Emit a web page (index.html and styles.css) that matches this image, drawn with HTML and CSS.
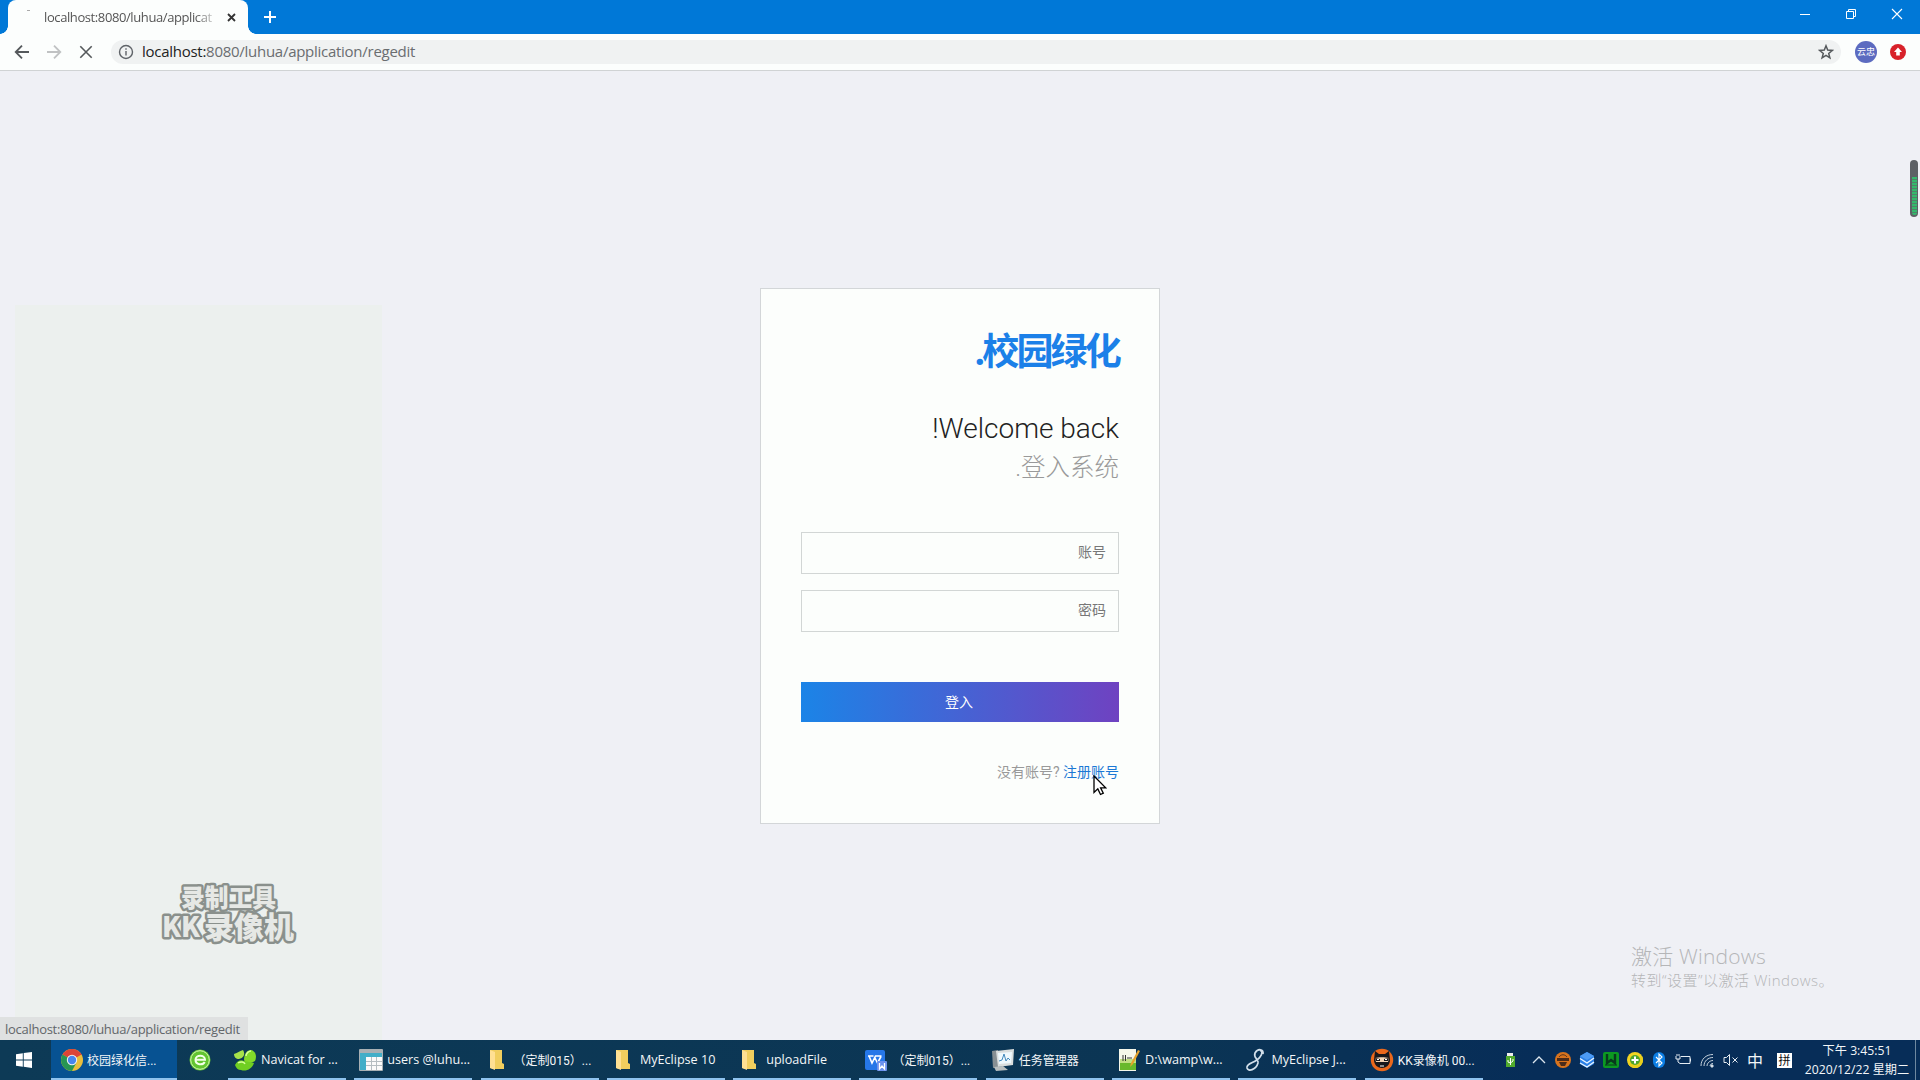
FILE: index.html
```html
<!DOCTYPE html>
<html lang="zh-CN">
<head>
<meta charset="utf-8">
<title>校园绿化信息系统</title>
<link rel="stylesheet" href="styles.css">
</head>
<body>
<div class="screen">
  <header class="titlebar">
    <div class="tab">
      <span class="spinner"></span>
      <span class="tab-title">localhost:8080/luhua/applicat</span>
      <svg class="tab-close" width="9" height="9" viewBox="0 0 9 9"><path d="M1 1l7 7M8 1l-7 7" stroke="#333" stroke-width="1.8"/></svg>
    </div>
    <svg class="new-tab" width="14" height="14" viewBox="0 0 14 14"><path d="M7 1v12M1 7h12" stroke="#fff" stroke-width="2"/></svg>
    <div class="window-buttons">
      <svg width="12" height="12" viewBox="0 0 12 12"><path d="M1 6.5h10" stroke="#fff"/></svg>
      <svg width="12" height="12" viewBox="0 0 12 12" fill="none" stroke="#fff"><path d="M1.5 3.5h7v7h-7zM3.5 3.5v-2h7v7h-2"/></svg>
      <svg width="12" height="12" viewBox="0 0 12 12"><path d="M1 1l10 10M11 1L1 11" stroke="#fff" stroke-width="1.1"/></svg>
    </div>
  </header>

  <nav class="toolbar">
    <svg class="nav-icon" width="16" height="16" viewBox="0 0 16 16" fill="none" stroke="#55595c" stroke-width="1.8"><path d="M15 8H2M8 1.7L1.7 8 8 14.3"/></svg>
    <svg class="nav-icon" width="16" height="16" viewBox="0 0 16 16" fill="none" stroke="#c0c2c3" stroke-width="1.8"><path d="M1 8h13M8 1.7L14.3 8 8 14.3"/></svg>
    <svg class="nav-icon" width="16" height="16" viewBox="0 0 16 16" fill="none" stroke="#55595c" stroke-width="1.6"><path d="M2.3 2.3l11.4 11.4M13.7 2.3L2.3 13.7"/></svg>
    <div class="address">
      <svg width="16" height="16" viewBox="0 0 16 16" fill="none" stroke="#5f6368" stroke-width="1.4"><circle cx="8" cy="8" r="6.5"/><path d="M8 7v4.5M8 4.2v1.6"/></svg>
      <span class="url"><b>localhost:</b>8080/luhua/application/regedit</span>
      <svg class="star" width="16" height="16" viewBox="0 0 16 16" fill="none" stroke="#55595c" stroke-width="1.5"><path d="M8 1.8l1.7 4.3 4.6.3-3.6 3 1.2 4.5L8 11.4l-3.9 2.5 1.2-4.5-3.6-3 4.6-.3z"/></svg>
    </div>
    <span class="avatar">云忠</span>
    <svg class="update" width="16" height="16" viewBox="0 0 16 16"><circle cx="8" cy="8" r="8" fill="#d8222a"/><path d="M8 3.5l4 4.4H9.8V11.5H6.2V7.9H4z" fill="#fff"/></svg>
  </nav>

  <main class="page">
    <form class="card" dir="rtl">
      <h1 class="brand">校园绿化.</h1>
      <h2 class="welcome">Welcome back!</h2>
      <p class="subtitle">登入系统.</p>
      <input class="field" type="text" placeholder="账号">
      <input class="field" type="text" placeholder="密码">
      <button class="submit" type="button">登入</button>
      <p class="signup" dir="ltr">没有账号? <a href="#">注册账号</a></p>
    </form>

    <svg class="recorder-mark" width="150" height="72" viewBox="0 0 150 72">
      <text x="24" y="28" font-size="25" textLength="95" lengthAdjust="spacingAndGlyphs">录制工具</text>
      <text x="5" y="58" font-size="28" textLength="38" lengthAdjust="spacingAndGlyphs">KK</text>
      <text x="47" y="59" font-size="30" textLength="90" lengthAdjust="spacingAndGlyphs">录像机</text>
    </svg>
    <div class="activate">
      <div class="activate-title">激活 Windows</div>
      <div class="activate-text">转到“设置”以激活 Windows。</div>
    </div>
    <div class="level"><span></span></div>
    <div class="status">localhost:8080/luhua/application/regedit</div>
    <svg class="cursor" width="14" height="22" viewBox="0 0 14 22"><path d="M1 1v16.5l3.8-3.6 2.7 5.6 2.8-1.3-2.7-5.4H12.7z" fill="#fff" stroke="#000" stroke-width="1.3"/></svg>
  </main>

  <footer class="taskbar">
    <div class="start"><svg width="16" height="16" viewBox="0 0 16 16" fill="#fff"><path d="M0 2.2l6.8-1v6.3H0zM7.7 1.1L16 0v7.5H7.7zM0 8.4h6.8v6.4L0 13.8zM7.7 8.4H16V16l-8.3-1.2z"/></svg></div>
    <div class="task active">
      <svg width="22" height="22" viewBox="0 0 22 22"><circle cx="11" cy="11" r="11" fill="#e9bf3c"/><path d="M11 11L1.5 5.5A11 11 0 0 1 20.5 5.5z" fill="#dc4437"/><path d="M11 11L1.5 5.5A11 11 0 0 0 11 22l4.5-8.5z" fill="#279653"/><path d="M11 6h9.7L20 4.8 8 4z" fill="#dc4437"/><circle cx="11" cy="11" r="5.2" fill="#f3f3f3"/><circle cx="11" cy="11" r="4.2" fill="#4886ed"/></svg>
      <span class="han">校园绿化信...</span>
    </div>
    <div class="pin"><svg width="22" height="22" viewBox="0 0 22 22"><circle cx="11" cy="11" r="10.5" fill="#62c52f"/><circle cx="11" cy="11" r="9.3" fill="none" stroke="#d4f5b4" stroke-width="1"/><path d="M6.500 10.800h9.500c0-5.500-9.500-5.500-9.500 0 0 5.200 7.300 5.800 9.200 2.200" fill="none" stroke="#f3ffe8" stroke-width="2"/></svg></div>
    <div class="task">
      <svg width="24" height="24" viewBox="0 0 24 24"><path d="M1 6c4-1 5-3 9-4 3 5 0 8-4 9-3 0-5-2-5-5z" fill="#a6e24a"/><path d="M11 12c0-6 3-10 7-10 5 1 6 7 4 11-3 2-7 3-10 1z" fill="#82d929"/><path d="M2 17c2-4 6-6 9-4 3 1 8 1 10 2-2 6-8 9-13 7-3 0-5-2-6-5z" fill="#70cf22"/><path d="M13 8c0-3 3-5 5-5M5 15c3-2 6-1 7 1" stroke="#d8ff9a" stroke-width="1.500" fill="none"/></svg>
      <span>Navicat for ...</span>
    </div>
    <div class="task">
      <svg width="24" height="24" viewBox="0 0 24 24"><rect y="1" width="24" height="22" rx="1" fill="#a9b0b4"/><path d="M1 5h22v5H7v12H1z" fill="#42aec8"/><path d="M7 9h16v13H7z" fill="#fafafa"/><path d="M7 13.500h16M7 17.500h16M12.500 9v13M17.500 9v13" stroke="#b5bdc1" stroke-width="1"/></svg>
      <span>users @luhu...</span>
    </div>
    <div class="task">
      <svg width="24" height="24" viewBox="0 0 24 24"><path d="M4 2h12v13l2 1v5H8L4 20z" fill="#f1ce5e"/><path d="M4 2l5 2v18l-5-2z" fill="#ffe093"/></svg>
      <span class="han">（定制015）...</span>
    </div>
    <div class="task">
      <svg width="24" height="24" viewBox="0 0 24 24"><path d="M4 2h12v13l2 1v5H8L4 20z" fill="#f1ce5e"/><path d="M4 2l5 2v18l-5-2z" fill="#ffe093"/></svg>
      <span>MyEclipse 10</span>
    </div>
    <div class="task">
      <svg width="24" height="24" viewBox="0 0 24 24"><path d="M4 2h12v13l2 1v5H8L4 20z" fill="#f1ce5e"/><path d="M4 2l5 2v18l-5-2z" fill="#ffe093"/></svg>
      <span>uploadFile</span>
    </div>
    <div class="task">
      <svg width="24" height="24" viewBox="0 0 24 24"><rect x="1" y="2" width="20" height="20" rx="2" fill="#2677e8"/><path d="M4 8h5.500M5 8l3 7 3.500-7h6M11 10l2.500 5 3.500-6.500" stroke="#fff" stroke-width="1.600" fill="none"/><rect x="13" y="13" width="10" height="10" rx="1" fill="#6b91ee"/><path d="M15.500 15v6l2.500-3 2.500 3v-6" stroke="#fff" stroke-width="1.300" fill="none"/></svg>
      <span class="han">（定制015）...</span>
    </div>
    <div class="task">
      <svg width="24" height="24" viewBox="0 0 24 24"><path d="M1 3l6-1v17l-5 1z" fill="#878f93"/><path d="M5 3l18-2-1 16-15 2z" fill="#d9dddd"/><path d="M7 5l14-1-1 11-12 1z" fill="#eef8fd"/><path d="M8 13l3-1 2-6 2 7 2-3 2 2" stroke="#4289bd" fill="none"/><path d="M3 19l9-1 5 4-12 1z" fill="#b8bebf"/></svg>
      <span class="han">任务管理器</span>
    </div>
    <div class="task">
      <svg width="24" height="24" viewBox="0 0 24 24"><path d="M2 1h17v22H2z" fill="#f5f7e9"/><path d="M3 14h16v8H3z" fill="#68b92c"/><path d="M3 11h16v4H3z" fill="#bfdf83"/><path d="M6 7v6M8.500 7v6M10 10h5" stroke="#333"/><path d="M21 2l-7 13-1 4 3-3 7-13z" fill="#e5a32c"/></svg>
      <span>D:\wamp\w...</span>
    </div>
    <div class="task">
      <svg width="24" height="24" viewBox="0 0 24 24"><path d="M20 6c1-5-5-6-8-1-2 5 4 6 3 10-2 7-10 9-11 5-1-5 9-5 13-11 3-4 2-7 0-6" fill="none" stroke="#d2dfea" stroke-width="1.700"/></svg>
      <span>MyEclipse J...</span>
    </div>
    <div class="task">
      <svg width="24" height="24" viewBox="0 0 24 24"><circle cx="12" cy="12" r="11.200" fill="#e9681c"/><path d="M5 3l4 3h6l4-3 1 9c0 5-4 8-8 8s-8-3-8-8z" fill="#17171b"/><path d="M5 10c4-1 10-1 14 0l-1 4H6z" fill="#f2d3b3"/><path d="M5 10l5 1v2H6zM19 10l-5 1v2h4z" fill="#17171b"/><path d="M7 11.500h2M15 11.500h2M10 18h4" stroke="#fff"/></svg>
      <span class="han">KK录像机 00...</span>
    </div>

    <div class="tray">
      <svg viewBox="0 0 16 16"><path d="M5 1h6v3H5z" fill="#eee"/><path d="M4 4h9v11H4z" fill="#51aa2d"/><path d="M8.500 6v7M6 8v2l2.500 1L11 9V7" stroke="#fff" fill="none"/></svg>
      <svg viewBox="0 0 16 16"><path d="M2 11l6-6 6 6" fill="none" stroke="#dce6ee" stroke-width="1.300"/></svg>
      <svg viewBox="0 0 16 16"><circle cx="8" cy="8" r="8" fill="#d8731d"/><path d="M2 6h12v3H2zM4 10h8l-2 4H6z" fill="#4b2b1a"/><path d="M4 5c2-3 6-3 8 0" stroke="#5b341c" fill="none"/></svg>
      <svg viewBox="0 0 16 16"><path d="M8 0l7 4v8l-7 4-7-4V4z" fill="#2b80e7"/><path d="M8 0l7 4-7 4-7-4z" fill="#4d9bf5"/><path d="M1 6.500l7 4.500 7-5M1 11l7 4 7-5" stroke="#e9f5ff" stroke-width="1.400" fill="none"/></svg>
      <svg viewBox="0 0 16 16"><rect width="16" height="16" rx="2" fill="#0c9922"/><path d="M4 2v9l4-3 4 3V2" fill="none" stroke="#08391d" stroke-width="2.400"/><path d="M2 13h12" stroke="#08391d"/></svg>
      <svg viewBox="0 0 16 16"><circle cx="8" cy="8" r="8" fill="#f2d522"/><path d="M1 12A8 8 0 0 0 15 4L8 8z" fill="#e8cf1c"/><circle cx="8" cy="8" r="5" fill="#4fa52c"/><path d="M8 4.500v7M4.500 8h7" stroke="#fff" stroke-width="2"/></svg>
      <svg viewBox="0 0 16 16"><rect x="2" width="12" height="16" rx="6" fill="#0b7ee5"/><path d="M5 5l6 6-3 3V2l3 3-6 6" stroke="#fff" fill="none" stroke-width="1.100"/></svg>
      <svg viewBox="0 0 16 16" fill="none" stroke="#e6edf3"><path d="M6 4.500h9v7H5M15.500 6.500v3M1 4v3h4V4M3 7v3l2 1.500M2 2v2M4 2v2"/></svg>
      <svg viewBox="0 0 16 16" fill="none" stroke="#c6d2dd"><path d="M2 14C2 7 7 2.500 14 2.500M5 14c0-5 4-8.500 9-8.500M8 14c0-3 3-5.500 6-5.500M11 14c0-1.500 1.500-2.500 3-2.500"/><path d="M12 13h2v2h-2z" fill="#fff"/></svg>
      <svg viewBox="0 0 16 16" fill="none" stroke="#e6edf3"><path d="M1 5.500h2.500l3-3v11l-3-3H1zM9.500 5.500l5 5M14.500 5.500l-5 5"/></svg>
      <span class="ime">中</span>
      <span class="pinyin">拼</span>
    </div>
    <div class="clock"><div>下午 3:45:51</div><div>2020/12/22 星期二</div></div>
    <div class="show-desktop"></div>
  </footer>
</div>
</body>
</html>
```
FILE: styles.css
```css
* { box-sizing: border-box; }
body { margin: 0; overflow: hidden; font-family: "Open Sans", "Noto Sans CJK SC", sans-serif; }
h1, h2, p { margin: 0; }
svg { display: block; flex: none; }
.screen { width: 1920px; height: 1080px; display: flex; flex-direction: column; }

.titlebar { height: 34px; flex: none; background: #0078d7; display: flex; padding-left: 8px; }
.tab { width: 240px; background: #fcfefd; border-radius: 8px 8px 0 0; display: flex; align-items: center; padding: 0 12px 0 19px; position: relative; }
.tab::before, .tab::after { content: ""; position: absolute; bottom: 0; width: 8px; height: 8px; }
.tab::before { left: -8px; background: radial-gradient(circle at 0 0, transparent 7.5px, #fcfefd 8px); }
.tab::after { right: -8px; background: radial-gradient(circle at 100% 0, transparent 7.5px, #fcfefd 8px); }
.spinner { width: 3px; height: 1px; background: #aaa; align-self: flex-start; margin: 10px 14px 0 0; flex: none; }
.tab-title { width: 176px; white-space: nowrap; font-size: 13px; letter-spacing: -.4px; color: #555; -webkit-mask-image: linear-gradient(90deg, #000 86%, transparent 100%); }
.tab-close { margin-left: 7px; }
.new-tab { margin: 10px 0 0 15px; }
.window-buttons { margin-left: auto; display: flex; gap: 34px; padding: 8px 17px 0 0; }

.toolbar { height: 37px; flex: none; background: #fcfefd; border-bottom: 1px solid #d0d3d4; display: flex; align-items: center; padding: 0 14px; }
.nav-icon { margin-right: 16px; }
.address { width: 1730px; height: 24px; border-radius: 12px; background: #f0f2f2; display: flex; align-items: center; padding: 0 7px 0 7px; margin-left: 1px; }
.url { margin: -2px 0 0 8px; font-size: 15px; letter-spacing: -.27px; color: #6a6d70; white-space: nowrap; }
.url b { font-weight: 400; color: #222; }
.star { margin-left: auto; }
.avatar { width: 22px; height: 22px; margin-left: 14px; border-radius: 50%; background: #5c6bc0; color: #fff; font-size: 9px; line-height: 22px; text-align: center; flex: none; }
.update { margin-left: 13px; }

.page { height: 969px; flex: none; position: relative; background: linear-gradient(#ecf0ee, #ecf0ee) 15px 234px / 367px 735px no-repeat, #eff0f5; display: flex; justify-content: center; align-items: flex-start; padding-top: 217px; }
.card { width: 400px; height: 536px; padding: 34px 40px; border: 1px solid #d3d6d8; background: #fcfefc; display: flex; flex-direction: column; }
.brand { height: 56px; line-height: 56px; font-size: 37px; letter-spacing: -2.8px; color: #1b80e8; }
.welcome { margin-top: 30px; height: 40px; font: 300 28px/40px Roboto, sans-serif; color: #222; }
.subtitle { height: 40px; line-height: 38px; font-size: 24.5px; font-weight: 300; color: #999; font-family: Roboto, "Noto Sans CJK SC", sans-serif; }
.field { height: 42px; margin: 43px 0 0; padding: 0 12px 3px; border: 1px solid #d2d6d5; border-radius: 0; background: transparent; font: 14px Roboto, "Noto Sans CJK SC", sans-serif; outline: 0; }
.field::placeholder { color: #777; }
.field + .field { margin-top: 16px; }
.submit { height: 40px; margin: 50px 0 0; padding: 0 2px 3px 0; border: 0; color: #fff; background: linear-gradient(90deg, #1b84e7, #6f42c1); font: 14px Roboto, "Noto Sans CJK SC", sans-serif; }
.signup { margin-top: 40px; text-align: right; font: 14px/21px Roboto, "Noto Sans CJK SC", sans-serif; color: #999; }
.signup a { color: #1b78d5; text-decoration: none; }

.cursor { position: absolute; left: 1093px; top: 704px; }
.recorder-mark { position: absolute; left: 157px; top: 808px; fill: #e6e8e5; stroke: #8a908c; stroke-width: 5px; stroke-linejoin: round; paint-order: stroke; font-family: "Noto Sans CJK SC", sans-serif; font-weight: 900; }
.activate { position: absolute; left: 1631px; top: 871px; color: #b5b6b8; white-space: nowrap; font-weight: 300; }
.activate-title { font-size: 21px; line-height: 28px; letter-spacing: .2px; }
.activate-text { font-size: 15px; line-height: 20px; letter-spacing: .5px; }
.level { position: absolute; left: 1910px; top: 89px; width: 8px; height: 57px; border-radius: 4px; background: #5d6065; padding: 17px 1.5px 2px; }
.level span { display: block; height: 100%; border-radius: 0 0 3px 3px; background: repeating-linear-gradient(#34b86c 0 2px, #52806a 2px 3px); }
.status { position: absolute; left: 0; bottom: 0; width: 248px; height: 23px; padding-left: 5px; background: #dfe1e1; color: #62666a; font-size: 13px; line-height: 24px; letter-spacing: -.28px; white-space: nowrap; }

.taskbar { height: 40px; flex: none; display: flex; background: linear-gradient(90deg, #0d3a56, #0b3554 60%, #072d58 80%); color: #f3f6f8; }
.start { width: 51px; display: flex; align-items: center; padding-left: 16px; }
.pin { width: 43px; padding: 9px 0 0 12px; margin-right: 8px; }
.task { width: 118px; margin-right: 8.3px; border-bottom: 2px solid #8fc3ee; display: flex; align-items: center; padding: 1px 0 0 5px; gap: 4px; white-space: nowrap; flex: none; font-size: 12.6px; }
.task.active { width: 126px; margin-right: 0; padding-left: 10px; background: #075292; }
.han { font-family: Roboto, "Noto Sans CJK SC", sans-serif; font-size: 12px; }
.tray { margin-left: auto; display: flex; align-items: center; gap: 8px; }
.tray svg { width: 16px; height: 16px; }
.tray svg:first-child { margin-right: 5px; }
.ime { font: 16px/20px "Noto Sans CJK SC", sans-serif; width: 16px; }
.pinyin { margin-left: 6px; width: 15px; height: 15px; background: #fff; color: #111; font: 12px/14px "Noto Sans CJK SC", sans-serif; text-align: center; }
.clock { width: 116px; margin-left: 7px; text-align: center; font-size: 12.2px; line-height: 19px; padding-top: 1px; white-space: nowrap; }
.show-desktop { width: 5px; border-left: 1px solid #6e88a0; }
```
